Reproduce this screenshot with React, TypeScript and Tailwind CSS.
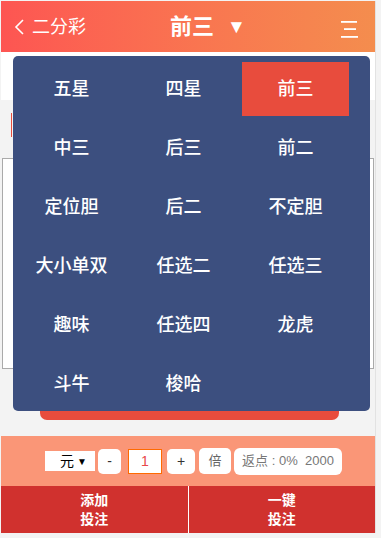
import React, { useState } from 'react';

const PLAYS = [
  '五星', '四星', '前三',
  '中三', '后三', '前二',
  '定位胆', '后二', '不定胆',
  '大小单双', '任选二', '任选三',
  '趣味', '任选四', '龙虎',
  '斗牛', '梭哈',
];

const FONT = "font-['Liberation_Sans','Noto_Sans_CJK_SC',sans-serif]";

const Header: React.FC<{ title: string }> = ({ title }) => (
  <div className="h-[51px] flex items-center bg-gradient-to-r from-[#fd5552] to-[#f48d4e] text-white relative">
    <div className="flex items-center pl-[12px] gap-[7px]">
      <svg width="12" height="18" viewBox="0 0 12 18" fill="none">
        <path d="M10 2 L3 9 L10 16" stroke="white" strokeWidth="1.6" />
      </svg>
      <span className="text-[18px] leading-none">二分彩</span>
    </div>
    <div className="absolute left-[169px] top-0 h-full flex items-center gap-[13px]">
      <span className="text-[22px] font-bold leading-none">{title}</span>
      <span className="text-[19px] leading-none">▼</span>
    </div>
    <svg className="absolute left-[339px] top-[19px]" width="20" height="19" viewBox="0 0 20 19">
      <rect x="1" y="1" width="16" height="1.8" fill="white" />
      <rect x="4" y="8.2" width="12" height="1.8" fill="white" />
      <rect x="1" y="16" width="17" height="1.8" fill="white" />
    </svg>
  </div>
);

const PlayMenu: React.FC<{ active: string; onPick: (p: string) => void }> = ({ active, onPick }) => (
  <div className="absolute left-[13px] top-[56px] w-[357px] h-[355px] bg-[#3c4f7f] rounded-[5px] pl-[5px] pt-[6px]">
    <div className="grid grid-cols-[repeat(3,107px)] auto-rows-[54px] gap-x-[5px] gap-y-[5px]">
      {PLAYS.map((p) => (
        <button
          key={p}
          onClick={() => onPick(p)}
          className={`flex items-center justify-center text-white text-[18px] font-medium ${p === active ? 'bg-[#e84c3d]' : ''}`}
        >
          {p}
        </button>
      ))}
    </div>
  </div>
);

const Controls: React.FC = () => (
  <div className="h-[50px] bg-[#fa9677] flex items-center pl-[44px] text-[14px]">
    <div className="w-[50px] h-[20px] bg-white flex items-center justify-between pl-[15px] pr-[8px] text-black">
      <span>元</span>
      <span className="text-[10px]">▼</span>
    </div>
    <div className="ml-[3px] w-[23px] h-[25px] bg-white rounded-[5px] flex items-center justify-center text-[#333]">-</div>
    <div className="ml-[7px] w-[34px] h-[25px] bg-white border border-[#ff6a00] flex items-center justify-center text-[#e8474a]">1</div>
    <div className="ml-[5px] w-[28px] h-[25px] bg-white rounded-[5px] flex items-center justify-center text-[#333]">+</div>
    <div className="ml-[4px] w-[32px] h-[26px] bg-white rounded-[5px] flex items-center justify-center text-[#666] text-[13px]">倍</div>
    <div className="ml-[3px] w-[108px] h-[27px] bg-white rounded-[6px] flex items-center justify-center text-[#777] text-[13px]">返点 : 0%&nbsp;&nbsp;2000</div>
  </div>
);

export default function App() {
  const [active, setActive] = useState('前三');

  return (
    <div className={`w-[381px] h-[538px] bg-[#f3f3f3] relative overflow-hidden ${FONT}`}>
      <div className="ml-px mt-px w-[375px] border-r border-[#e2e2e2]">
        <Header title={active} />
        <div className="h-[48px] bg-white" />
        <div className="h-[58px] relative">
          <div className="absolute left-[10px] top-[13px] w-px h-[24px] bg-[#e84c3d]" />
        </div>
        <div className="mx-px h-[211px] bg-white border border-[#aaaaaa]" />
        <div className="h-[67px] relative">
          <div className="absolute left-[39px] top-[30px] w-[299px] h-[21px] bg-[#e84c3d] rounded-b-[7px]" />
        </div>
        <Controls />
        <div className="h-[47px] bg-[#d0312e] flex text-white text-[14px] font-bold leading-[19px]">
          <button className="flex-1 flex flex-col items-center justify-center border-r border-white">
            <span>添加</span>
            <span>投注</span>
          </button>
          <button className="flex-1 flex flex-col items-center justify-center">
            <span>一键</span>
            <span>投注</span>
          </button>
        </div>
      </div>
      <PlayMenu active={active} onPick={setActive} />
    </div>
  );
}
